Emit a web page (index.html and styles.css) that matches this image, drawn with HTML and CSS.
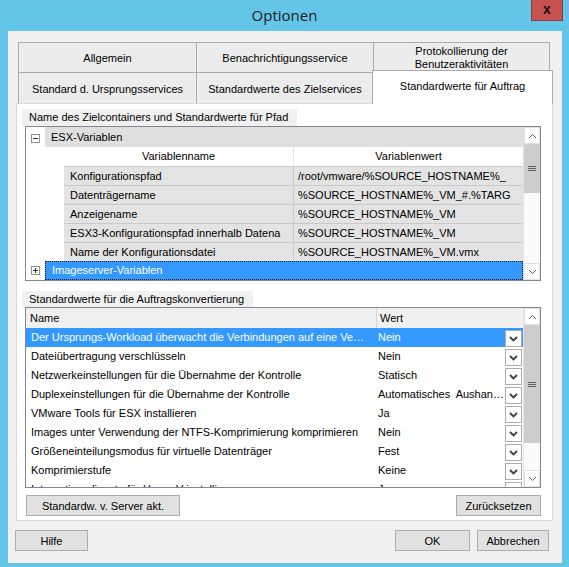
FILE: index.html
```html
<!DOCTYPE html>
<html lang="de">
<head>
<meta charset="utf-8">
<title>Optionen</title>
<link rel="stylesheet" href="styles.css">
</head>
<body>
<div class="window">
  <div class="titlebar">
    <span class="title">Optionen</span>
    <div class="close">x</div>
  </div>
  <div class="client">
    <div class="tabs">
      <div class="tabrow row1">
        <div class="tab t1">Allgemein</div>
        <div class="tab t2">Benachrichtigungsservice</div>
        <div class="tab t3">Protokollierung der<br>Benutzeraktivitäten</div>
      </div>
      <div class="tabrow row2">
        <div class="tab t1">Standard d. Ursprungsservices</div>
        <div class="tab t2">Standardwerte des Zielservices</div>
        <div class="tab t3 active">Standardwerte für Auftrag</div>
      </div>
    </div>
    <div class="panel">
      <div class="grouplabel gl1">Name des Zielcontainers und Standardwerte für Pfad</div>
      <div class="tree">
        <div class="tree-body">
          <div class="node">
            <div class="gutter"><svg class="exp" width="9" height="9" viewBox="0 0 9 9"><rect x="0.5" y="0.5" width="8" height="8" fill="#fff" stroke="#919191"/><path d="M2 4.5H7" stroke="#333" stroke-width="1"/></svg></div>
            <div class="nodehead">ESX-Variablen</div>
          </div>
          <div class="subtable">
            <div class="sh">Variablenname</div><div class="sh shr">Variablenwert</div>
            <div class="sc">Konfigurationspfad</div><div class="sc scr">/root/vmware/%SOURCE_HOSTNAME%_</div>
            <div class="sc">Datenträgername</div><div class="sc scr">%SOURCE_HOSTNAME%_VM_#.%TARG</div>
            <div class="sc">Anzeigename</div><div class="sc scr">%SOURCE_HOSTNAME%_VM</div>
            <div class="sc">ESX3-Konfigurationspfad innerhalb Datena</div><div class="sc scr">%SOURCE_HOSTNAME%_VM</div>
            <div class="sc">Name der Konfigurationsdatei</div><div class="sc scr">%SOURCE_HOSTNAME%_VM.vmx</div>
          </div>
          <div class="node node2">
            <div class="gutter"><svg class="exp" width="9" height="9" viewBox="0 0 9 9"><rect x="0.5" y="0.5" width="8" height="8" fill="#fff" stroke="#919191"/><path d="M2 4.5H7M4.5 2V7" stroke="#333" stroke-width="1"/></svg></div>
            <div class="nodehead selected">Imageserver-Variablen</div>
          </div>
        </div>
        <div class="vscroll">
          <div class="sbtn"><svg width="9" height="6" viewBox="0 0 9 6"><path d="M1 5L4.5 1.5L8 5" stroke="#606060" fill="none"/></svg></div>
          <div class="thumb thumb1"><svg width="8" height="7" viewBox="0 0 8 7"><path d="M0 1.5H8M0 3.5H8M0 5.5H8" stroke="#606060"/></svg></div>
          <div class="track"></div>
          <div class="sbtn"><svg width="9" height="6" viewBox="0 0 9 6"><path d="M1 1L4.5 4.5L8 1" stroke="#606060" fill="none"/></svg></div>
        </div>
      </div>

      <div class="grouplabel gl2">Standardwerte für die Auftragskonvertierung</div>
      <div class="grid">
        <div class="grid-body">
          <div class="ghead">
            <div class="gh">Name</div>
            <div class="gh ghv">Wert</div>
          </div>
          <div class="grow sel"><div class="gn">Der Ursprungs-Workload überwacht die Verbindungen auf eine Ve…</div><div class="gv">Nein</div><div class="dd"><svg width="9" height="6" viewBox="0 0 9 6"><path d="M1 1L4.5 4.5L8 1" stroke="#404040" stroke-width="1.8" fill="none"/></svg></div></div>
          <div class="grow"><div class="gn">Dateiübertragung verschlüsseln</div><div class="gv">Nein</div><div class="dd"><svg width="9" height="6" viewBox="0 0 9 6"><path d="M1 1L4.5 4.5L8 1" stroke="#404040" stroke-width="1.8" fill="none"/></svg></div></div>
          <div class="grow"><div class="gn">Netzwerkeinstellungen für die Übernahme der Kontrolle</div><div class="gv">Statisch</div><div class="dd"><svg width="9" height="6" viewBox="0 0 9 6"><path d="M1 1L4.5 4.5L8 1" stroke="#404040" stroke-width="1.8" fill="none"/></svg></div></div>
          <div class="grow"><div class="gn">Duplexeinstellungen für die Übernahme der Kontrolle</div><div class="gv">Automatisches&nbsp; Aushan…</div><div class="dd"><svg width="9" height="6" viewBox="0 0 9 6"><path d="M1 1L4.5 4.5L8 1" stroke="#404040" stroke-width="1.8" fill="none"/></svg></div></div>
          <div class="grow"><div class="gn">VMware Tools für ESX installieren</div><div class="gv">Ja</div><div class="dd"><svg width="9" height="6" viewBox="0 0 9 6"><path d="M1 1L4.5 4.5L8 1" stroke="#404040" stroke-width="1.8" fill="none"/></svg></div></div>
          <div class="grow"><div class="gn">Images unter Verwendung der NTFS-Komprimierung komprimieren</div><div class="gv">Nein</div><div class="dd"><svg width="9" height="6" viewBox="0 0 9 6"><path d="M1 1L4.5 4.5L8 1" stroke="#404040" stroke-width="1.8" fill="none"/></svg></div></div>
          <div class="grow"><div class="gn">Größeneinteilungsmodus für virtuelle Datenträger</div><div class="gv">Fest</div><div class="dd"><svg width="9" height="6" viewBox="0 0 9 6"><path d="M1 1L4.5 4.5L8 1" stroke="#404040" stroke-width="1.8" fill="none"/></svg></div></div>
          <div class="grow"><div class="gn">Komprimierstufe</div><div class="gv">Keine</div><div class="dd"><svg width="9" height="6" viewBox="0 0 9 6"><path d="M1 1L4.5 4.5L8 1" stroke="#404040" stroke-width="1.8" fill="none"/></svg></div></div>
          <div class="grow"><div class="gn">Integrationsdienste für Hyper-V installieren</div><div class="gv">Ja</div><div class="dd"><svg width="9" height="6" viewBox="0 0 9 6"><path d="M1 1L4.5 4.5L8 1" stroke="#404040" stroke-width="1.8" fill="none"/></svg></div></div>
        </div>
        <div class="vscroll">
          <div class="sbtn"><svg width="9" height="6" viewBox="0 0 9 6"><path d="M1 5L4.5 1.5L8 5" stroke="#606060" fill="none"/></svg></div>
          <div class="thumb thumb2"><svg width="8" height="7" viewBox="0 0 8 7"><path d="M0 1.5H8M0 3.5H8M0 5.5H8" stroke="#606060"/></svg></div>
          <div class="track"></div>
          <div class="sbtn"><svg width="9" height="6" viewBox="0 0 9 6"><path d="M1 1L4.5 4.5L8 1" stroke="#606060" fill="none"/></svg></div>
        </div>
      </div>

      <div class="panelbuttons">
        <div class="btn b-server">Standardw. v. Server akt.</div>
        <div class="btn b-reset">Zurücksetzen</div>
      </div>
    </div>
    <div class="dlgbuttons">
      <div class="btn b-help">Hilfe</div>
      <div class="spacer"></div>
      <div class="btn b-ok">OK</div>
      <div class="btn b-cancel">Abbrechen</div>
    </div>
  </div>
</div>
</body>
</html>
```

FILE: styles.css
```css
* { box-sizing: border-box; }
html, body { margin: 0; padding: 0; }
body {
  font-family: "Liberation Sans", Arial, sans-serif;
  font-size: 11px;
  color: #000;
  background: #ffffff;
}

.window {
  width: 569px;
  height: 567px;
  background: #63c6e9;
  display: flex;
  flex-direction: column;
  position: relative;
  overflow: hidden;
}

.titlebar {
  height: 31px;
  flex: none;
  display: flex;
  align-items: center;
  justify-content: center;
}
.title {
  font-family: "Open Sans", "Noto Sans", sans-serif;
  font-size: 15px;
  color: #1b1b1b;
  margin-top: -1px;
}
.close {
  position: absolute;
  top: 0;
  right: 6px;
  width: 32px;
  height: 21px;
  background: #c75050;
  border: 1px solid #8e3b3b;
  border-top: none;
  display: flex;
  align-items: center;
  justify-content: center;
  font: bold 14px "Liberation Sans", Arial, sans-serif;
  color: #111;
  padding-bottom: 2px;
}

.client {
  flex: 1;
  margin: 0 7px 4px 8px;
  background: #f0f0f0;
  padding: 11px 0 0 8px;
  display: flex;
  flex-direction: column;
}

/* tabs */
.tabs {
  margin-left: 2px;
  width: 535px;
}
.tabrow {
  display: flex;
}
.row1 { height: 30px; }
.row2 { height: 31px; }
.tab {
  border: 1px solid #acacac;
  border-bottom: none;
  background: #ececec;
  display: flex;
  align-items: center;
  justify-content: center;
  text-align: center;
  line-height: 13px;
  margin-right: -1px;
  color: #000;
}
.t1 { width: 179px; }
.t2 { width: 178px; }
.t3 { width: 177px; }
.row1 .tab { padding-top: 1px; }
.row2 .tab { padding-top: 2px; }
.tab.active {
  background: #ffffff;
  position: relative;
  z-index: 1;
  margin-top: -2px;
  margin-left: -1px;
  width: 181px;
  height: 34px;
  padding-top: 0;
  padding-bottom: 2px;
}

.panel {
  width: 537px;
  height: 418px;
  background: #ffffff;
  border: 1px solid #d9d9d9;
  padding: 5px 0 0 5px;
  display: flex;
  flex-direction: column;
  align-items: flex-start;
  flex: none;
}

.grouplabel {
  background: #f0f0f0;
  height: 17px;
  line-height: 17px;
  padding: 0 9px 0 7px;
  white-space: nowrap;
}
.gl2 {
  margin-top: 10px;
  height: 16px;
  line-height: 16px;
}

/* tree */
.tree {
  margin-left: 3px;
  width: 516px;
  height: 155px;
  border: 1px solid #828790;
  background: #ffffff;
  display: flex;
}
.tree-body {
  flex: 1;
  display: flex;
  flex-direction: column;
  overflow: hidden;
}
.node {
  display: flex;
  height: 20px;
  flex: none;
}
.node2 { height: 19px; }
.gutter {
  width: 19px;
  flex: none;
  padding: 7px 0 0 5px;
}
.node2 .gutter { padding-top: 5px; }
.exp { display: block; }
.nodehead {
  flex: 1;
  background: #dfdfdf;
  padding-left: 6px;
  line-height: 20px;
  white-space: nowrap;
}
.nodehead.selected {
  background: #3399ff;
  color: #fff;
  line-height: 17px;
  border: 1px dotted #1a1a1a;
}

.subtable {
  margin-left: 38px;
  display: grid;
  grid-template-columns: 229px 230px;
  grid-auto-rows: 19px;
  flex: none;
}
.sh {
  background: #ffffff;
  text-align: center;
  line-height: 19px;
}
.shr { border-left: 1px solid #e6e6e6; }
.sc {
  background: #e3e3e3;
  border-top: 1px solid #c9c9c9;
  line-height: 18px;
  padding-left: 6px;
  white-space: nowrap;
  overflow: hidden;
}
.sc.scr {
  border-left: 1px solid #c9c9c9;
  padding-left: 4px;
}

/* scrollbar */
.vscroll {
  width: 17px;
  flex: none;
  display: flex;
  flex-direction: column;
  background: #ffffff;
  border-left: 1px solid #e4e4e4;
}
.sbtn {
  height: 17px;
  flex: none;
  display: flex;
  align-items: center;
  justify-content: center;
  background: #ffffff;
  border: 1px solid #e0e0e0;
}
.thumb {
  flex: none;
  background: #cdcdcd;
  display: flex;
  align-items: center;
  justify-content: center;
}
.thumb1 { height: 49px; }
.thumb2 { height: 118px; }
.track { flex: 1; background: #fafafa; }

/* grid */
.grid {
  margin-left: 3px;
  width: 516px;
  height: 181px;
  border: 1px solid #828790;
  background: #ffffff;
  display: flex;
}
.grid-body {
  flex: 1;
  overflow: hidden;
  display: flex;
  flex-direction: column;
}
.ghead {
  display: grid;
  grid-template-columns: 350px 147px;
  height: 20px;
  flex: none;
  background: #f0f0f0;
}
.gh {
  line-height: 20px;
  padding-left: 4px;
}
.ghv {
  border-left: 1px solid #d5d5d5;
  padding-left: 3px;
}
.grow {
  display: grid;
  grid-template-columns: 350px 129px 17px 1px;
  height: 19px;
  flex: none;
  align-items: start;
}
.gn {
  padding-left: 5px;
  line-height: 19px;
  white-space: nowrap;
  overflow: hidden;
}
.gv {
  padding-left: 2px;
  line-height: 19px;
  white-space: nowrap;
  overflow: hidden;
}
.grow.sel {
  background: #3399ff;
  color: #ffffff;
}
.dd {
  margin-top: 2px;
  width: 17px;
  height: 17px;
  border: 1px solid #acacac;
  background: #ffffff;
  display: flex;
  align-items: center;
  justify-content: center;
}

/* buttons */
.btn {
  height: 21px;
  background: #e1e1e1;
  border: 1px solid #adadad;
  display: flex;
  align-items: center;
  justify-content: center;
  white-space: nowrap;
}
.panelbuttons {
  margin-top: 7px;
  margin-left: 4px;
  width: 515px;
  display: flex;
  justify-content: space-between;
}
.b-server { width: 154px; }
.b-reset { width: 85px; }

.dlgbuttons {
  margin-top: 9px;
  margin-left: -1px;
  width: 534px;
  display: flex;
}
.spacer { flex: 1; }
.b-help { width: 73px; }
.b-ok { width: 75px; margin-right: 7px; }
.b-cancel { width: 72px; }
```
